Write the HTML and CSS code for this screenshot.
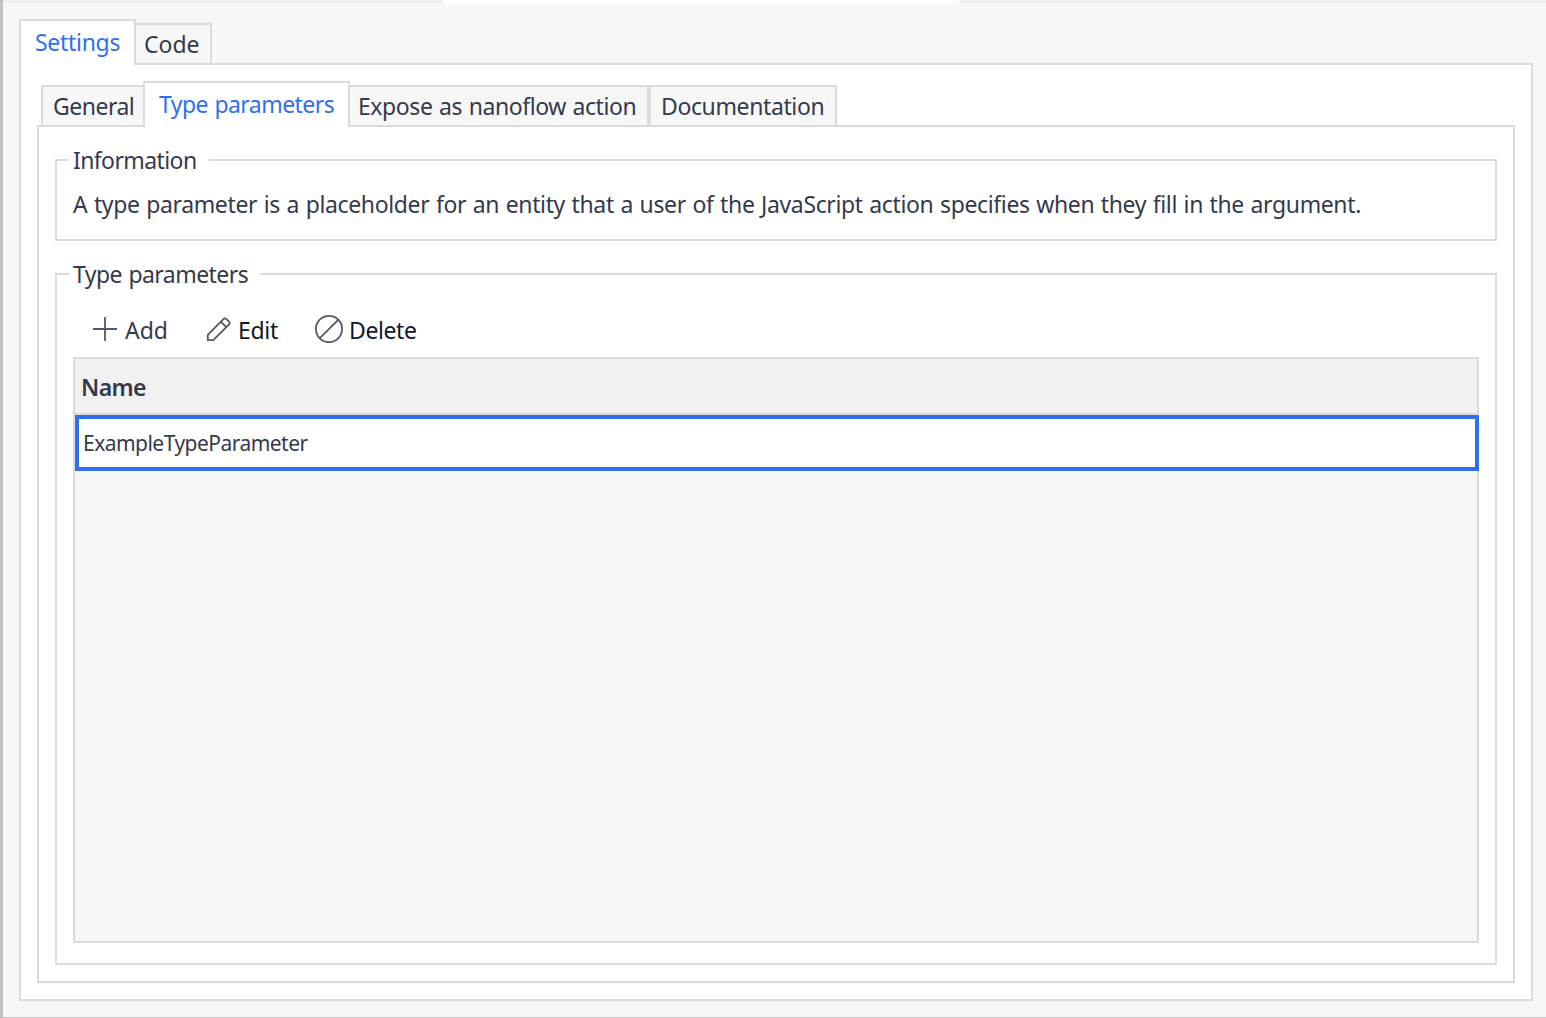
FILE: index.html
```html
<!DOCTYPE html>
<html lang="en">
<head>
<meta charset="utf-8">
<title>JavaScript action</title>
<link rel="stylesheet" href="styles.css">
</head>
<body>
<div class="window">
  <div class="strip"><div class="strip-active"></div></div>
  <main class="content">
    <nav class="tabs tabs-outer">
      <div class="tab active tab-settings"><span>Settings</span></div>
      <div class="tab tab-code"><span>Code</span></div>
    </nav>
    <section class="panel panel-outer">
      <nav class="tabs tabs-inner">
        <div class="tab tab-general"><span>General</span></div>
        <div class="tab active tab-types"><span>Type parameters</span></div>
        <div class="tab tab-expose"><span>Expose as nanoflow action</span></div>
        <div class="tab tab-docs"><span>Documentation</span></div>
      </nav>
      <section class="panel panel-inner">
        <fieldset class="group group-info">
          <legend class="info-title">Information</legend>
          <p class="description">A type parameter is a placeholder for an entity that a user of the JavaScript action specifies when they fill in the argument.</p>
        </fieldset>
        <fieldset class="group group-types">
          <legend class="types-title">Type parameters</legend>
          <div class="toolbar">
            <div class="tool tool-add">
              <svg width="28" height="28" viewBox="0 0 28 28"><path d="M14 2v24M2 14h24"/></svg>
              <span>Add</span>
            </div>
            <div class="tool tool-edit">
              <svg width="28" height="28" viewBox="0 0 28 28"><path d="M2.8 25.2v-5.4L18.4 4.1q1.5-1.5 3 0l2.5 2.5q1.5 1.5 0 3L8.2 25.2zM15.8 6.7l5.5 5.5"/></svg>
              <span>Edit</span>
            </div>
            <div class="tool tool-delete">
              <svg width="28" height="28" viewBox="0 0 28 28"><circle cx="14" cy="14" r="13.1"/><path d="M4.8 23.2L23.2 4.8"/></svg>
              <span>Delete</span>
            </div>
          </div>
          <div class="grid">
            <div class="grid-header"><span>Name</span></div>
            <div class="grid-row"><span>ExampleTypeParameter</span></div>
          </div>
        </fieldset>
      </section>
    </section>
  </main>
</div>
</body>
</html>
```
FILE: styles.css
```css
* { box-sizing: border-box; }

body {
  margin: 0;
  color: #343a4b;
  font: 23px/32px "Noto Sans", "Open Sans", sans-serif;
  word-spacing: 1px;
  white-space: nowrap;
}

.window {
  display: flex;
  flex-direction: column;
  width: 1546px;
  height: 1018px;
  overflow: hidden;
  background: #f7f7f7;
  border-left: 3px solid #c1c1c7;
  border-bottom: 1px solid #c3c3c4;
}

.strip { height: 3px; flex: none; background: #f1f1f1; }
.strip-active { width: 516px; height: 3px; margin-left: 440px; background: #fff; }

.content {
  flex: 1;
  display: flex;
  flex-direction: column;
  padding: 16px 13px 16px 16px;
}

.tabs {
  display: flex;
  align-items: flex-end;
  height: 46px;
  flex: none;
  margin-bottom: -2px;
  position: relative;
}

.tab {
  height: 40px;
  margin-bottom: 2px;
  padding-top: 3px;
  background: #f7f7f7;
  border: 2px solid #dadbdc;
  border-bottom: 0;
}

.tab.active {
  height: 46px;
  margin-bottom: 0;
  padding-top: 5px;
  background: #fff;
  color: #306fee;
  position: relative;
  z-index: 1;
}

.tab-settings { width: 117px; padding-left: 14px; letter-spacing: -.3px; }
.tab-code { width: 78px; margin-left: -2px; padding-left: 8px; }
.tab-general { width: 104px; padding-left: 10px; letter-spacing: -.5px; }
.tab-types { width: 207px; margin-left: -2px; padding-left: 14px; letter-spacing: -.55px; }
.tab-expose { width: 301px; margin-left: -2px; padding-left: 8px; letter-spacing: -.42px; }
.tab-docs { width: 188px; padding-left: 10px; letter-spacing: -.38px; }

.panel {
  flex: 1;
  display: flex;
  flex-direction: column;
  min-height: 0;
  background: #fff;
  border: 2px solid #dadbdc;
}

.panel-outer { padding: 16px; }
.tabs-inner { padding-left: 4px; }
.panel-inner { padding: 16px; }

.group {
  min-width: 0;
  margin: 0;
  padding: 0 16px;
  border: 2px solid #dadbdc;
}

.group legend {
  height: 34px;
  margin-left: -4px;
  padding: 0 12px 0 4px;
  line-height: 34px;
}

.group-info { height: 98px; flex: none; }
.group-types { height: 708px; margin-top: 16px; flex: none; }
.info-title { width: 140px; letter-spacing: -.6px; }
.types-title { width: 191px; letter-spacing: -.55px; }

.description { margin: 11px 0 0; letter-spacing: -.37px; }

.toolbar {
  display: flex;
  height: 66px;
  padding: 23px 0 0 18px;
}

.tool { display: flex; height: 32px; color: #111827; }
.tool svg { flex: none; margin-top: 1px; fill: none; stroke: #555866; stroke-width: 1.8; }
.tool-add { width: 114px; gap: 6px; color: #343a4b; }
.tool-edit { width: 110px; gap: 5px; letter-spacing: -.3px; }
.tool-delete { gap: 6px; letter-spacing: -.4px; }

.grid {
  height: 586px;
  background: #f7f7f7;
  border: 2px solid #dadbdc;
}

.grid-header {
  height: 56px;
  padding: 12px 0 0 6px;
  background: #f1f1f1;
  border-bottom: 2px solid #dadbdc;
  font-weight: 600;
  letter-spacing: -.55px;
}

.grid-row {
  height: 56px;
  margin-right: -2px;
  padding: 8px 0 0 4px;
  background: #fff;
  border: 4px solid #306fee;
  position: relative;
  font-size: 21px;
  letter-spacing: -.53px;
}
```
